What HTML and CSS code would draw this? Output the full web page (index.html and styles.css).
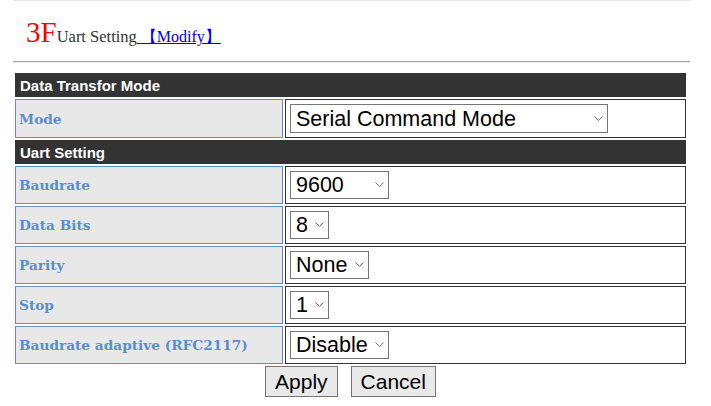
FILE: index.html
```html
<!DOCTYPE html>
<html>
<head>
<meta charset="utf-8">
<title>Uart Setting</title>
<link rel="stylesheet" href="styles.css">
</head>
<body>
<div class="page">
  <div class="topline"></div>
  <div class="title">
    <span class="floor">3F</span><span class="name">Uart Setting</span>
    <a class="modify" href="#">&nbsp;【Modify】</a>
  </div>
  <div class="rule"></div>
  <table class="grid">
    <tr><th colspan="2" class="head">Data Transfor Mode</th></tr>
    <tr class="row-tall">
      <td class="label">Mode</td>
      <td class="value">
        <span class="selwrap">
          <select class="sel sel-mode">
            <option>Serial Command Mode</option>
            <option>Transparent Transmission Mode</option>
          </select>
          <svg class="chev" width="9" height="5" viewBox="0 0 9 5"><path d="M0.5 0.5 L4.5 4.5 L8.5 0.5" fill="none" stroke="#6f6f6f" stroke-width="1"/></svg>
        </span>
      </td>
    </tr>
    <tr><th colspan="2" class="head">Uart Setting</th></tr>
    <tr>
      <td class="label">Baudrate</td>
      <td class="value">
        <span class="selwrap">
          <select class="sel sel-baud">
            <option>9600</option><option>115200</option><option>230400</option>
          </select>
          <svg class="chev" width="9" height="5" viewBox="0 0 9 5"><path d="M0.5 0.5 L4.5 4.5 L8.5 0.5" fill="none" stroke="#6f6f6f" stroke-width="1"/></svg>
        </span>
      </td>
    </tr>
    <tr>
      <td class="label">Data Bits</td>
      <td class="value">
        <span class="selwrap">
          <select class="sel sel-bits"><option>8</option><option>7</option><option>6</option><option>5</option></select>
          <svg class="chev" width="9" height="5" viewBox="0 0 9 5"><path d="M0.5 0.5 L4.5 4.5 L8.5 0.5" fill="none" stroke="#6f6f6f" stroke-width="1"/></svg>
        </span>
      </td>
    </tr>
    <tr>
      <td class="label">Parity</td>
      <td class="value">
        <span class="selwrap">
          <select class="sel sel-parity"><option>None</option><option>Odd</option><option>Even</option></select>
          <svg class="chev" width="9" height="5" viewBox="0 0 9 5"><path d="M0.5 0.5 L4.5 4.5 L8.5 0.5" fill="none" stroke="#6f6f6f" stroke-width="1"/></svg>
        </span>
      </td>
    </tr>
    <tr>
      <td class="label">Stop</td>
      <td class="value">
        <span class="selwrap">
          <select class="sel sel-bits"><option>1</option><option>2</option></select>
          <svg class="chev" width="9" height="5" viewBox="0 0 9 5"><path d="M0.5 0.5 L4.5 4.5 L8.5 0.5" fill="none" stroke="#6f6f6f" stroke-width="1"/></svg>
        </span>
      </td>
    </tr>
    <tr>
      <td class="label">Baudrate adaptive (RFC2117)</td>
      <td class="value">
        <span class="selwrap">
          <select class="sel sel-adapt"><option>Disable</option><option>Enable</option></select>
          <svg class="chev" width="9" height="5" viewBox="0 0 9 5"><path d="M0.5 0.5 L4.5 4.5 L8.5 0.5" fill="none" stroke="#6f6f6f" stroke-width="1"/></svg>
        </span>
      </td>
    </tr>
    <tr>
      <td colspan="2" class="actions">
        <div class="btnrow">
          <button class="btn">Apply</button>
          <button class="btn">Cancel</button>
        </div>
      </td>
    </tr>
  </table>
</div>
</body>
</html>
```
FILE: styles.css
```css
html, body {
  margin: 0;
  padding: 0;
  background: #ffffff;
}
.page {
  margin-left: 13px;
  width: 677px;
}
.topline {
  height: 1px;
  background: #e4e4e4;
}
.title {
  height: 59px;
  display: flex;
  align-items: baseline;
  padding-left: 13px;
  box-sizing: border-box;
  line-height: 1;
  padding-top: 17px;
}
.floor {
  font-family: "Liberation Serif", serif;
  font-size: 29px;
  color: #ff0000;
}
.name {
  font-family: "Liberation Serif", serif;
  font-size: 16.5px;
  color: #333333;
}
.modify {
  font-family: "Liberation Serif", serif;
  font-size: 16px;
  color: #0000ee;
  text-decoration: underline;
}
.rule {
  height: 2px;
  background: #a8a8a8;
  border-bottom: 1px solid #e8e8e8;
  box-sizing: border-box;
  margin-top: 1px;
}
.grid {
  width: 675px;
  border-spacing: 2px;
  margin-top: 8px;
  font-family: "Liberation Sans", Arial, sans-serif;
}
.head {
  background: #333333;
  color: #ffffff;
  font-size: 15px;
  font-weight: bold;
  text-align: left;
  height: 24px;
  padding: 0 5px;
  box-sizing: border-box;
}
.label {
  width: 268px;
  box-sizing: border-box;
  background: #e8e8e8;
  border: 1px solid #5b8fd0;
  color: #5a8dd0;
  font-family: "DejaVu Serif", serif;
  font-weight: bold;
  font-size: 13.7px;
  padding: 0 3px;
  vertical-align: middle;
}
.value {
  border: 1px solid #333333;
  padding: 4px;
  vertical-align: middle;
}
.selwrap {
  position: relative;
  display: inline-block;
  vertical-align: top;
}
.sel {
  display: block;
  -webkit-appearance: none;
  appearance: none;
  font-family: "Liberation Sans", Arial, sans-serif;
  font-size: 21.5px;
  color: #000;
  height: 28px;
  line-height: 26px;
  padding: 0 0 0 5px;
  border: 1px solid #767676;
  border-radius: 0;
  background: #fff;
  margin: 0;
  box-sizing: border-box;
}
.row-tall .sel {
  height: 29px;
}
.chev {
  position: absolute;
  right: 5px;
  top: 50%;
  margin-top: -3px;
}
.sel-mode { width: 318px; }
.sel-baud { width: 99px; }
.sel-bits { width: 39px; }
.sel-parity { width: 79px; }
.sel-adapt { width: 99px; }
.actions {
  padding: 0;
}
.btnrow {
  display: flex;
  justify-content: center;
  gap: 13px;
}
.btn {
  font-family: "Liberation Sans", Arial, sans-serif;
  font-size: 21px;
  height: 31px;
  padding: 0 9px;
  margin: 0;
  background: #e9e9e9;
  border: 1px solid #767676;
  border-radius: 0;
  color: #000;
}
```
